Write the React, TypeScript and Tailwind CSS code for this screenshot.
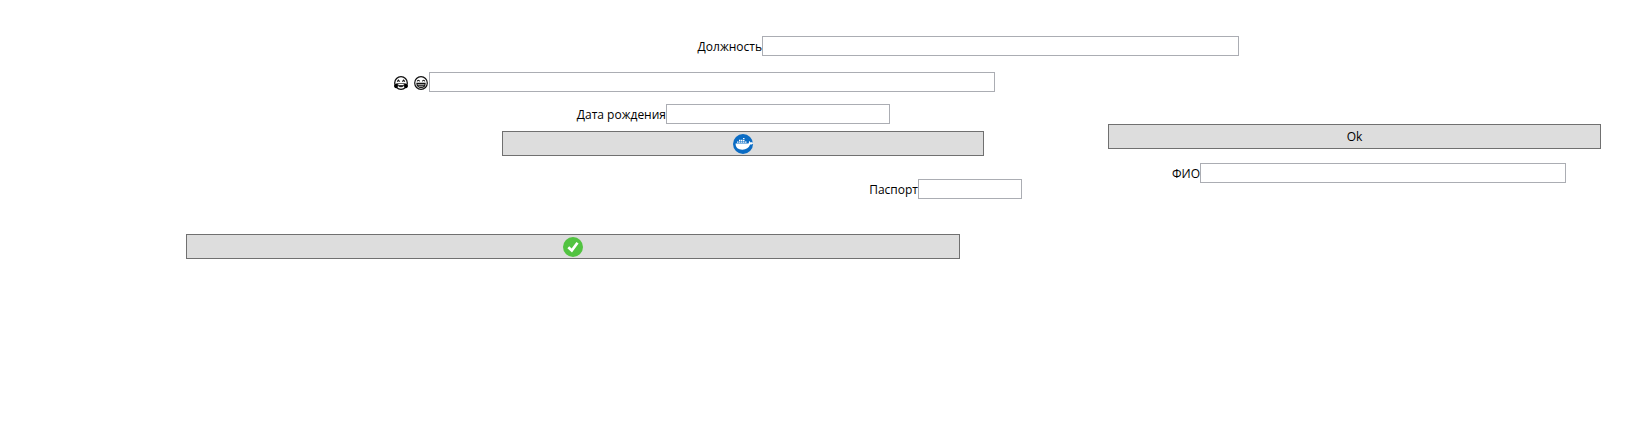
import type { ReactNode } from "react";

const labelClass = "justify-self-end whitespace-nowrap pt-[2px] text-xs leading-[18px]";
const inputClass =
  "h-5 w-full min-w-0 border border-[#abadb3] bg-white px-1 text-xs outline-none focus:border-[#569de5]";
const buttonClass =
  "flex h-[25px] w-full min-w-0 items-center justify-center border border-[#707070] bg-[#dddddd] text-xs hover:bg-[#bee6fd]";

function Field({ id, label, columns }: { id: string; label: ReactNode; columns: string }) {
  return (
    <div className={`grid items-center ${columns}`}>
      <label htmlFor={id} className={labelClass}>
        {label}
      </label>
      <input id={id} type="text" className={inputClass} />
    </div>
  );
}

function TearsOfJoyFace() {
  return (
    <svg viewBox="0 0 14 14" className="size-[14px]" role="img" aria-label="😂">
      <circle cx="7" cy="7" r="6.300" fill="none" stroke="#111" strokeWidth="1.300" />
      <path d="M3.200 5.600l1.200-1.400 1.200 1.400M8.400 5.600l1.200-1.400 1.200 1.400" fill="none" stroke="#111" strokeWidth="1.200" />
      <path d="M3.400 7.200h7.200c0 2.500-1.500 4-3.600 4s-3.600-1.500-3.600-4z" fill="#222" />
      <path d="M4.300 7.900h5.400v1.200H4.300z" fill="#fff" />
      <path d="M3.500 7.200C2.200 7.400.300 8.300.100 9.700c-.2 1.700 1.200 2.800 2.500 2.400 1.500-.5 1.700-2.500.9-4.900zM10.500 7.200c1.300.2 3.200 1.100 3.400 2.500.2 1.700-1.200 2.800-2.500 2.400-1.500-.5-1.700-2.500-.9-4.900z" fill="#000" />
    </svg>
  );
}

function GrinningFace() {
  return (
    <svg viewBox="0 0 14 14" className="size-[14px]" role="img" aria-label="😁">
      <circle cx="7" cy="7" r="6.300" fill="none" stroke="#111" strokeWidth="1.200" />
      <path d="M3.200 5.400c.4-1.500 2-1.500 2.400 0M8.400 5.400c.4-1.500 2-1.500 2.400 0" fill="none" stroke="#111" strokeWidth="1.100" />
      <path d="M2.900 7.400h8.200c0 2.500-1.700 4-4.100 4s-4.100-1.500-4.100-4z" fill="#bbb" stroke="#111" strokeWidth="1.100" />
      <path d="M3.200 9.300h7.600" stroke="#111" strokeWidth=".9" />
    </svg>
  );
}

function DockerIcon() {
  return (
    <svg viewBox="0 0 20 20" className="size-5" aria-hidden="true">
      <circle cx="10" cy="10" r="10" fill="#0b6cc4" />
      <path
        fill="#fff"
        d="M2.600 9.600h12.900c.4-.4.500-.9.400-1.500-.1-.5.100-.9.400-1.200.5.400.9.900 1 1.500.8-.2 1.700-.1 2.600.3v1c-.8.600-1.700.9-2.800.9-1 3.300-4 5.100-7.700 5.100-4.200 0-6.800-1.700-6.800-6.100z"
      />
      <path
        fill="#fff"
        d="M4 7.600h1.500v1.100H4zM6 7.600h1.500v1.100H6zM8 7.600h1.500v1.100H8zM10 7.600h1.500v1.100H10zM12 7.600h1.500v1.100H12zM6 5.800h1.500v1.100H6zM8 5.800h1.500v1.100H8zM10 5.800h1.500v1.100H10zM10 4h1.500v1.100H10z"
      />
    </svg>
  );
}

function CheckIcon() {
  return (
    <svg viewBox="0 0 20 20" className="size-5" aria-hidden="true">
      <circle cx="10" cy="10" r="10" fill="#52c341" />
      <path d="M5.300 10.200l3.500 3.300 5.700-7.800" fill="none" stroke="#fff" strokeWidth="2.700" />
    </svg>
  );
}

export default function App() {
  return (
    <main className="bg-white pt-9 font-['Open_Sans','Noto_Sans',sans-serif] text-black">
      <Field id="position" label="Должность" columns="grid-cols-[762fr_477fr_404fr]" />
      <div className="mt-4">
        <Field
          id="mood"
          label={
            <span className="flex h-[18px] items-center gap-[6px] pr-px">
              <TearsOfJoyFace />
              <GrinningFace />
            </span>
          }
          columns="grid-cols-[429fr_566fr_648fr]"
        />
      </div>
      <div className="mt-3 grid grid-cols-[1108fr_493fr_42fr]">
        <div className="min-w-0">
          <Field id="birth-date" label="Дата рождения" columns="grid-cols-[666fr_224fr_218fr]" />
          <div className="mt-[7px] grid grid-cols-[502fr_482fr_124fr]">
            <button type="button" aria-label="Docker" className={`col-start-2 ${buttonClass}`}>
              <DockerIcon />
            </button>
          </div>
          <div className="mt-[23px]">
            <Field id="passport" label="Паспорт" columns="grid-cols-[918fr_104fr_86fr]" />
          </div>
          <div className="mt-[35px] grid grid-cols-[186fr_774fr_148fr]">
            <button type="button" aria-label="Готово" className={`col-start-2 ${buttonClass}`}>
              <CheckIcon />
            </button>
          </div>
        </div>
        <div className="mt-5 min-w-0">
          <button type="button" className={buttonClass}>
            Ok
          </button>
          <div className="mt-[14px]">
            <Field id="full-name" label="ФИО" columns="grid-cols-[92fr_366fr_35fr]" />
          </div>
        </div>
      </div>
    </main>
  );
}
